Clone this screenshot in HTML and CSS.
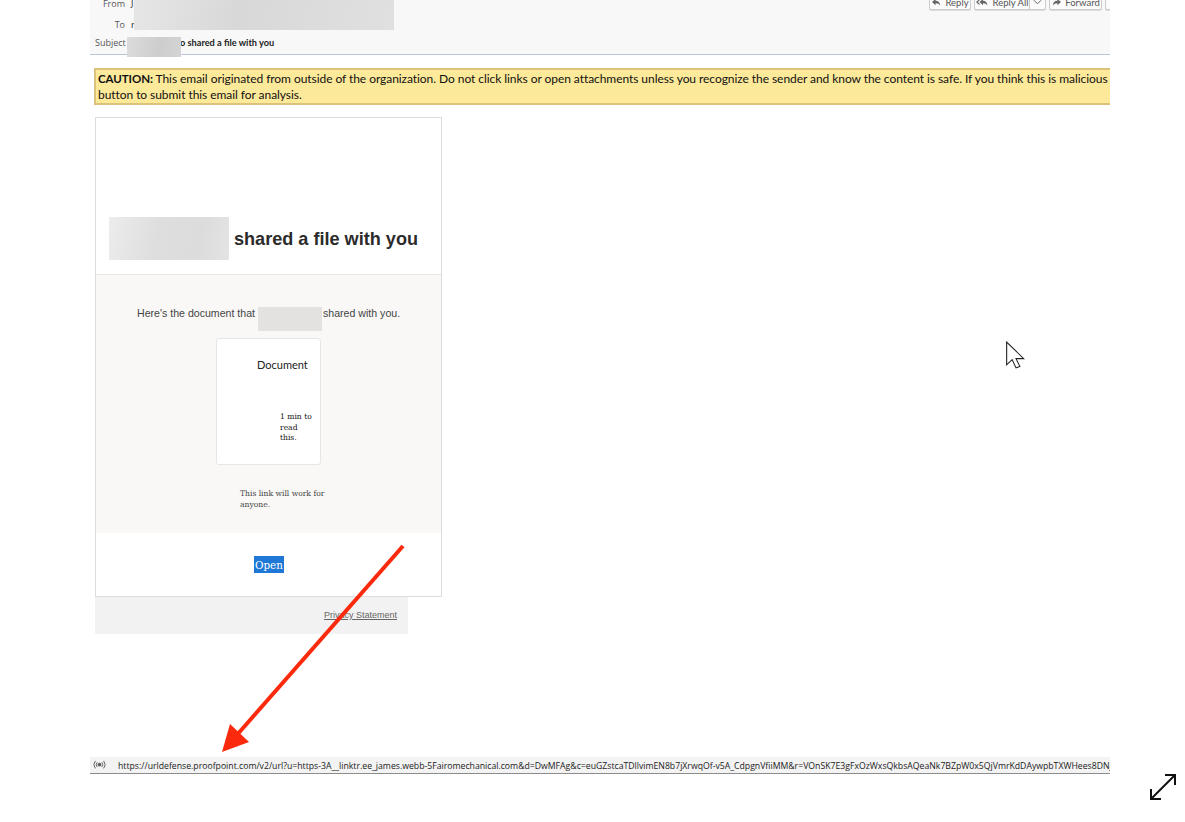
FILE: index.html
```html
<!DOCTYPE html>
<html>
    <head>
        <title>Email preview</title>
        <link rel="stylesheet" href="styles.css">
    </head>
    <body>
        <div class="frame">
            <header class="mail-header">
                <div class="mail-fields">
                    <div class="field field-from">
                        <span class="field-label">From</span>
                        <span class="field-value">J</span>
                        <span class="redact redact-from"></span>
                    </div>
                    <div class="field field-to">
                        <span class="field-label">To</span>
                        <span class="field-value">r</span>
                    </div>
                    <div class="field field-subject">
                        <span class="field-label">Subject</span>
                        <span class="redact redact-subject"></span>
                        <span class="subject-text">o shared a file with you</span>
                    </div>
                </div>
                <div class="mail-actions">
                    <button class="action action-reply" type="button">
                        <svg class="action-icon" viewBox="0 0 12 10"><path d="M5 1 1 4.500 5 8V5.800c2.500 0 4 .8 5 2.700C10 5 8 3 5 3z"/></svg>
                        Reply
                    </button>
                    <div class="action-split">
                        <button class="action action-left" type="button">
                            <svg class="action-icon action-icon-wide" viewBox="0 0 16 10"><path d="M4 1 0 4.500 4 8V6L2 4.500 4 3zM8 1 4 4.500 8 8V5.800c2.500 0 4 .8 5 2.700C13 5 11 3 8 3z"/></svg>
                            Reply All
                        </button>
                        <button class="action action-caret" type="button">
                            <svg class="caret" viewBox="0 0 10 6"><path d="M1 1l4 4 4-4"/></svg>
                        </button>
                    </div>
                    <button class="action action-forward" type="button">
                        <svg class="action-icon" viewBox="0 0 12 10"><path d="M7 1l4 3.500L7 8V5.800C4.500 5.800 3 6.600 2 8.500 2 5 4 3 7 3z"/></svg>
                        Forward
                    </button>
                    <button class="action action-cut" type="button"></button>
                </div>
            </header>

            <div class="caution">
                <b>CAUTION:</b> This email originated from outside of the organization. Do not click links or open attachments unless you recognize the sender and know the content is safe. If you think this is malicious please use the report<br>
                button to submit this email for analysis.
            </div>

            <div class="message">
                <div class="card">
                    <div class="card-top">
                        <span class="redact redact-name"></span>
                        <h1 class="card-title">shared a file with you</h1>
                    </div>
                    <div class="card-body">
                        <p class="card-intro">Here's the document that <span class="redact redact-inline"></span>shared with you.</p>
                        <div class="doc-tile">
                            <div class="doc-name">Document</div>
                            <div class="doc-note">1 min to read this.</div>
                        </div>
                        <p class="card-hint">This link will work for anyone.</p>
                    </div>
                    <div class="card-action">
                        <a class="open-link" href="#">Open</a>
                    </div>
                </div>
                <div class="card-footer">
                    <a href="#">Privacy Statement</a>
                </div>
            </div>

            <div class="status-bar">
                <svg class="status-icon" viewBox="0 0 14 10">
                    <circle cx="7" cy="5" r="1.500"/>
                    <path d="M4.500 2.500a4 4 0 0 0 0 5M9.500 2.500a4 4 0 0 1 0 5M2.500 1a6.500 6.500 0 0 0 0 8M11.500 1a6.500 6.500 0 0 1 0 8"/>
                </svg>
                <span class="status-url">https://urldefense.proofpoint.com/v2/url?u=https-3A__linktr.ee_james.webb-5Fairomechanical.com&amp;d=DwMFAg&amp;c=euGZstcaTDllvimEN8b7jXrwqOf-v5A_CdpgnVfiiMM&amp;r=VOnSK7E3gFxOzWxsQkbsAQeaNk7BZpW0x5QjVmrKdDAywpbTXWHees8DNjq3kLm</span>
            </div>
        </div>

        <!-- annotations drawn on top of the screenshot -->
        <svg class="red-arrow" viewBox="0 0 200 225">
            <path class="red-arrow-line" d="M183 6 16 196"/>
            <path class="red-arrow-head" d="M2 212 10 184 29 202z"/>
        </svg>
        <svg class="cursor" viewBox="0 0 20 28" preserveAspectRatio="none">
            <path d="M1.500 1v22l5-5 3.500 8 3.500-1.500-3.500-7.500h7z"/>
        </svg>
        <svg class="expand" viewBox="0 0 28 28">
            <path d="M2 26 26 2M16 2h10v10M2 16v10h10"/>
        </svg>
    </body>
</html>
```

FILE: styles.css
```css
:root {
    --ui-font: "Open Sans", "Noto Sans", sans-serif;
    --tight-font: Lato, "Open Sans", sans-serif;
    --serif: "DejaVu Serif", "Liberation Serif", serif;
    --arial: "Liberation Sans", Arial, sans-serif;
}

*, *::before, *::after {
    box-sizing: border-box;
}

html, body {
    height: 100%;
}

body {
    margin: 0px;
    background-color: #fff;
    overflow: hidden;
    position: relative;
}

.frame {
    width: 1020px;
    height: 774px;
    margin-left: 90px;
    overflow: hidden;
    display: flex;
    flex-direction: column;
}

.redact {
    display: inline-block;
    background: linear-gradient(100deg, #e6e6e6, #d8d8d8 40%, #dcdcdc 70%, #e0e0e0);
}

/* mail header */
.mail-header {
    display: flex;
    justify-content: space-between;
    flex: 0 0 55px;
    background-color: #f8f8f8;
    border-bottom: 1px solid #b5c7d9;
    font-family: var(--ui-font);
    font-size: 9px;
    color: #555;
}

.mail-fields {
    position: relative;
    padding-left: 5px;
}

.field {
    display: flex;
    gap: 6px;
    white-space: nowrap;
}

.field-label {
    width: 30px;
    text-align: right;
}

.field-from {
    margin-top: -3px;
    height: 21px;
}

.field-to {
    height: 18px;
    line-height: 13px;
}

.field-subject {
    line-height: 13px;
}

.field-value {
    color: #222;
}

.redact-from {
    position: absolute;
    left: 44px;
    top: 0px;
    width: 260px;
    height: 30px;
}

.redact-subject {
    position: absolute;
    left: 37px;
    top: 37px;
    width: 54px;
    height: 20px;
    background: linear-gradient(100deg, #dcdcdc, #cdcdcd 60%, #d4d4d4);
}

.field-subject .field-label {
    text-align: left;
}

.subject-text {
    margin-left: 49px;
    font-family: var(--tight-font);
    font-size: 9.200px;
    font-weight: 700;
    color: #1c1c1c;
}

.mail-actions {
    display: flex;
    gap: 3px;
    margin-top: -6px;
    margin-right: -10px;
    height: 16px;
}

.action {
    display: flex;
    align-items: center;
    justify-content: center;
    gap: 3px;
    height: 16px;
    padding: 0px;
    border: 1px solid #ccc;
    border-radius: 2px;
    background-color: #fbfbfb;
    box-shadow: 0px 1px 0px #ddd;
    font-family: var(--tight-font);
    font-size: 9.500px;
    color: #555;
}

.action-reply {
    width: 42px;
}

.action-forward {
    width: 53px;
}

.action-icon {
    width: 11px;
    height: 9px;
    fill: #666;
}

.action-icon-wide {
    width: 14px;
}

.action-split {
    display: flex;
}

.action-left {
    width: 55px;
    border-right: 0px;
    border-radius: 2px 0px 0px 2px;
}

.action-caret {
    width: 17px;
    border-radius: 0px 2px 2px 0px;
}

.caret {
    width: 9px;
    height: 6px;
    fill: none;
    stroke: #555;
}

.action-cut {
    width: 15px;
}

/* caution banner */
.caution {
    flex: 0 0 37px;
    width: 1030px;
    margin: 13px 0px 0px 4px;
    padding: 1px 0px 0px 2px;
    background-color: #fde99a;
    border-top: 2px solid #dcc27a;
    border-left: 2px solid #dcc27a;
    border-bottom: 2px solid #dcc27a;
    font-family: var(--tight-font);
    font-size: 12px;
    letter-spacing: -0.06px;
    line-height: 16px;
    color: #111;
    white-space: nowrap;
}

.caution b {
    font-size: 11.500px;
}

/* message card */
.message {
    flex: 1;
    padding: 12px 0px 0px 5px;
}

.card {
    width: 347px;
    height: 480px;
    border: 1px solid #dcdcdc;
    background-color: #fff;
    display: flex;
    flex-direction: column;
}

.card-top {
    flex: 0 0 157px;
    display: flex;
    align-items: flex-end;
    gap: 5px;
    padding: 0px 0px 14px 13px;
    border-bottom: 1px solid #e6e6e6;
}

.redact-name {
    width: 120px;
    height: 43px;
    background: linear-gradient(100deg, #ececec, #dedede 40%, #dcdcdc 75%, #e4e4e4);
}

.card-title {
    margin: 0px 0px -1px;
    font-family: var(--arial);
    font-size: 18.100px;
    line-height: 43px;
    color: #2b2b2b;
}

.card-body {
    flex: 0 0 258px;
    background-color: #f9f8f7;
    display: flex;
    flex-direction: column;
    align-items: flex-start;
}

.card-intro {
    margin: 0px;
    padding: 32px 0px 0px 41px;
    height: 63px;
    font-family: var(--arial);
    font-size: 10.600px;
    line-height: 12px;
    color: #444;
    white-space: nowrap;
}

.redact-inline {
    width: 64px;
    height: 24px;
    margin-right: 1px;
    vertical-align: top;
    background: #e3e2e1;
}

.doc-tile {
    width: 105px;
    height: 127px;
    margin-left: 120px;
    padding: 19px 12px 0px 40px;
    background-color: #fff;
    border: 1px solid #e6e6e6;
    border-radius: 3px;
}

.doc-name {
    font-family: var(--tight-font);
    font-size: 11px;
    line-height: 14px;
    color: #222;
    white-space: nowrap;
}

.doc-note {
    width: 36px;
    margin: 40px 0px 0px 23px;
    font-family: var(--serif);
    font-size: 7.600px;
    line-height: 10.500px;
    color: #111;
}

.card-hint {
    width: 92px;
    margin: 23px 0px 0px 144px;
    font-family: var(--serif);
    font-size: 7.600px;
    line-height: 11px;
    color: #444;
}

.card-action {
    flex: 1;
    display: flex;
    align-items: flex-start;
    justify-content: flex-start;
    padding: 23px 0px 0px 158px;
}

.open-link {
    height: 17px;
    padding: 1px 1px 0px;
    background-color: #1f78d6;
    font-family: var(--serif);
    font-size: 10.300px;
    line-height: 16px;
    color: #fff;
    text-decoration: none;
}

.card-footer {
    width: 313px;
    height: 37px;
    padding: 12px 11px 0px 0px;
    background-color: #f2f2f2;
    font-family: var(--arial);
    font-size: 9px;
    line-height: 12px;
    text-align: right;
}

.card-footer a {
    color: #666;
}

/* status bar */
.status-bar {
    flex: 0 0 17px;
    display: flex;
    align-items: center;
    gap: 12px;
    padding-left: 3px;
    background-color: #f3f3f3;
    border-bottom: 1px solid #8c8c8c;
    font-family: var(--ui-font);
    font-size: 8.700px;
    color: #222;
    white-space: nowrap;
}

.status-url {
    padding-top: 1px;
}

.status-icon {
    flex: none;
    width: 13px;
    height: 9.300px;
    fill: #555;
    stroke: #555;
    stroke-width: 1;
}

.status-icon path {
    fill: none;
}

/* annotations */
.red-arrow {
    position: absolute;
    left: 220px;
    top: 540px;
    width: 200px;
    height: 225px;
}

.red-arrow-line {
    fill: none;
    stroke: #fb2a0c;
    stroke-width: 4;
}

.red-arrow-head {
    fill: #fb2a0c;
}

.cursor {
    position: absolute;
    left: 1005px;
    top: 341px;
    width: 22px;
    height: 29px;
    fill: #fff;
    stroke: #222;
    stroke-width: 1;
}

.expand {
    position: absolute;
    left: 1149px;
    top: 773px;
    width: 28px;
    height: 28px;
    fill: none;
    stroke: #111;
    stroke-width: 2;
}
```
